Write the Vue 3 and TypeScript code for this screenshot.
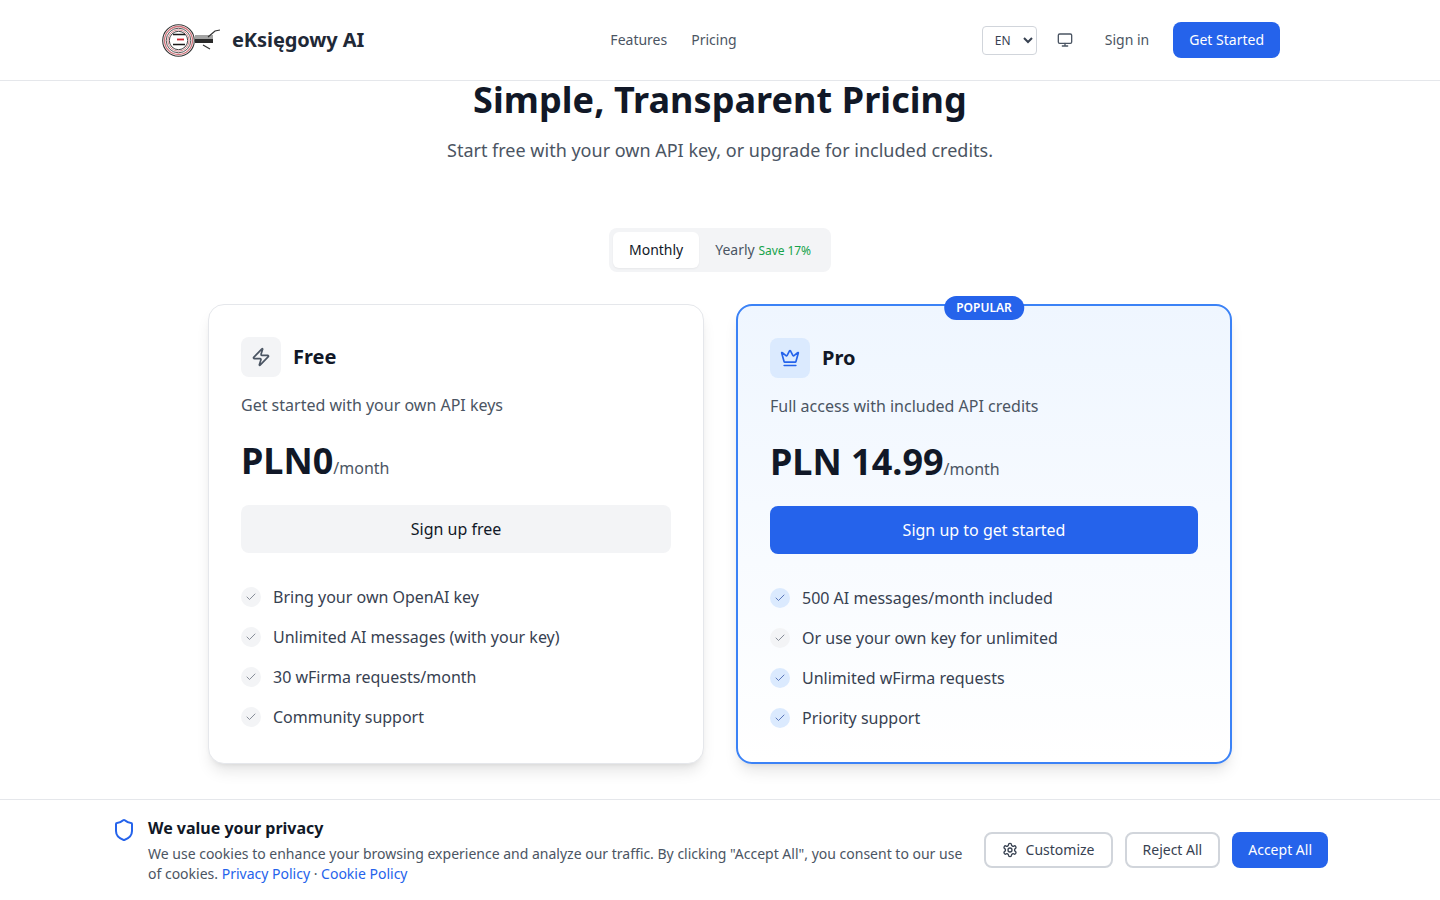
<script setup lang="ts">
import { ref } from 'vue';

interface Feature {
  text: string;
  highlight: boolean;
}

const lang = ref('en');

const freeFeatures: Feature[] = [
  { text: 'Bring your own OpenAI key', highlight: false },
  { text: 'Unlimited AI messages (with your key)', highlight: false },
  { text: '30 wFirma requests/month', highlight: false },
  { text: 'Community support', highlight: false },
];

const proFeatures: Feature[] = [
  { text: '500 AI messages/month included', highlight: true },
  { text: 'Or use your own key for unlimited', highlight: false },
  { text: 'Unlimited wFirma requests', highlight: true },
  { text: 'Priority support', highlight: true },
];
</script>

<template>
  <div class="page">
    <header class="header">
      <div class="header-inner">
        <a class="brand" href="#">
          <svg class="logo" width="60" height="36" viewBox="0 0 60 36" fill="none">
            <circle cx="18.5" cy="18.5" r="15.8" stroke="#333" stroke-width="1.1" />
            <circle cx="18.5" cy="18.5" r="14" stroke="#d0747c" stroke-width="1.3" />
            <circle cx="18.5" cy="18.5" r="12.3" stroke="#555" stroke-width="1" />
            <circle cx="18.5" cy="18.5" r="10.7" stroke="#d88a90" stroke-width="1" />
            <circle cx="18.5" cy="18.5" r="9.2" stroke="#444" stroke-width="1" />
            <path d="M13 12.5h12M13 22.5h12" stroke="#1a1a1a" stroke-width="1.6" />
            <path d="M17 17.5h7" stroke="#d0202c" stroke-width="1.8" />
            <rect x="35" y="13" width="18" height="4" fill="#a3a3a3" />
            <rect x="35" y="17" width="18" height="4" fill="#2a2a2a" />
            <path d="M48 15l7-6 5-1M43 23l7 4" stroke="#333" stroke-width="1.2" />
          </svg>
          <span class="brand-name">eKsięgowy AI</span>
        </a>
        <nav class="nav">
          <a href="#">Features</a>
          <a href="#">Pricing</a>
        </nav>
        <div class="header-actions">
          <select v-model="lang" class="lang-select">
            <option value="en">EN</option>
            <option value="pl">PL</option>
          </select>
          <button class="theme-btn" type="button" aria-label="Theme">
            <svg width="16" height="16" viewBox="0 0 24 24" fill="none" stroke="currentColor" stroke-width="2" stroke-linecap="round" stroke-linejoin="round">
              <rect x="2" y="3" width="20" height="14" rx="2" />
              <path d="M8 21h8M12 17v4" />
            </svg>
          </button>
          <a class="sign-in" href="#">Sign in</a>
          <a class="get-started" href="#">Get Started</a>
        </div>
      </div>
    </header>

    <main class="main">
      <h1 class="title">Simple, Transparent Pricing</h1>
      <p class="subtitle">Start free with your own API key, or upgrade for included credits.</p>

      <div class="billing-toggle">
        <button class="billing-option active" type="button">Monthly</button>
        <button class="billing-option" type="button">Yearly <span class="save">Save 17%</span></button>
      </div>

      <div class="plans">
        <section class="plan">
          <div class="plan-head">
            <div class="plan-icon">
              <svg width="20" height="20" viewBox="0 0 24 24" fill="none" stroke="currentColor" stroke-width="2" stroke-linecap="round" stroke-linejoin="round">
                <path d="M4 14a1 1 0 0 1-.78-1.63l9.9-10.2a.5.5 0 0 1 .86.46l-1.92 6.02A1 1 0 0 0 13 10h7a1 1 0 0 1 .78 1.63l-9.9 10.2a.5.5 0 0 1-.86-.46l1.92-6.02A1 1 0 0 0 11 14z" />
              </svg>
            </div>
            <h2 class="plan-name">Free</h2>
          </div>
          <p class="plan-desc">Get started with your own API keys</p>
          <div class="price"><span class="amount">PLN0</span><span class="period">/month</span></div>
          <a class="plan-btn" href="#">Sign up free</a>
          <ul class="features">
            <li v-for="item in freeFeatures" :key="item.text" class="feature">
              <span class="check">
                <svg width="12" height="12" viewBox="0 0 24 24" fill="none" stroke="currentColor" stroke-width="1.6" stroke-linecap="round" stroke-linejoin="round"><path d="M20 6 9 17l-5-5" /></svg>
              </span>
              {{ item.text }}
            </li>
          </ul>
        </section>

        <section class="plan pro">
          <span class="badge">POPULAR</span>
          <div class="plan-head">
            <div class="plan-icon">
              <svg width="20" height="20" viewBox="0 0 24 24" fill="none" stroke="currentColor" stroke-width="2" stroke-linecap="round" stroke-linejoin="round">
                <path d="M11.562 3.266a.5.5 0 0 1 .876 0L15.39 8.87a1 1 0 0 0 1.516.294L21.183 5.5a.5.5 0 0 1 .798.519l-2.834 10.246a1 1 0 0 1-.956.734H5.81a1 1 0 0 1-.957-.734L2.02 6.02a.5.5 0 0 1 .798-.519l4.276 3.664a1 1 0 0 0 1.516-.294z" />
                <path d="M5 21h14" />
              </svg>
            </div>
            <h2 class="plan-name">Pro</h2>
          </div>
          <p class="plan-desc">Full access with included API credits</p>
          <div class="price"><span class="amount">PLN 14.99</span><span class="period">/month</span></div>
          <a class="plan-btn primary" href="#">Sign up to get started</a>
          <ul class="features">
            <li v-for="item in proFeatures" :key="item.text" class="feature">
              <span class="check" :class="{ highlight: item.highlight }">
                <svg width="12" height="12" viewBox="0 0 24 24" fill="none" stroke="currentColor" stroke-width="1.6" stroke-linecap="round" stroke-linejoin="round"><path d="M20 6 9 17l-5-5" /></svg>
              </span>
              {{ item.text }}
            </li>
          </ul>
        </section>
      </div>
    </main>

    <aside class="cookie-bar">
      <div class="cookie-inner">
        <svg class="cookie-shield" width="24" height="24" viewBox="0 0 24 24" fill="none" stroke="currentColor" stroke-width="2" stroke-linecap="round" stroke-linejoin="round">
          <path d="M20 13c0 5-3.5 7.5-7.66 8.95a1 1 0 0 1-.67-.01C7.5 20.5 4 18 4 13V6a1 1 0 0 1 1-1c2 0 4.5-1.2 6.24-2.72a1.17 1.17 0 0 1 1.52 0C14.51 3.81 17 5 19 5a1 1 0 0 1 1 1z" />
        </svg>
        <div class="cookie-copy">
          <h3>We value your privacy</h3>
          <p>
            We use cookies to enhance your browsing experience and analyze our traffic. By clicking "Accept All", you consent to our use of cookies.
            <a href="#">Privacy Policy</a> · <a href="#">Cookie Policy</a>
          </p>
        </div>
        <div class="cookie-actions">
          <button class="outline-btn" type="button">
            <svg width="16" height="16" viewBox="0 0 24 24" fill="none" stroke="currentColor" stroke-width="2" stroke-linecap="round" stroke-linejoin="round">
              <path d="M12.22 2h-.44a2 2 0 0 0-2 2v.18a2 2 0 0 1-1 1.73l-.43.25a2 2 0 0 1-2 0l-.15-.08a2 2 0 0 0-2.73.73l-.22.38a2 2 0 0 0 .73 2.73l.15.1a2 2 0 0 1 1 1.72v.51a2 2 0 0 1-1 1.74l-.15.09a2 2 0 0 0-.73 2.73l.22.38a2 2 0 0 0 2.73.73l.15-.08a2 2 0 0 1 2 0l.43.25a2 2 0 0 1 1 1.73V20a2 2 0 0 0 2 2h.44a2 2 0 0 0 2-2v-.18a2 2 0 0 1 1-1.73l.43-.25a2 2 0 0 1 2 0l.15.08a2 2 0 0 0 2.73-.73l.22-.39a2 2 0 0 0-.73-2.73l-.15-.08a2 2 0 0 1-1-1.74v-.5a2 2 0 0 1 1-1.74l.15-.09a2 2 0 0 0 .73-2.73l-.22-.38a2 2 0 0 0-2.73-.73l-.15.08a2 2 0 0 1-2 0l-.43-.25a2 2 0 0 1-1-1.73V4a2 2 0 0 0-2-2z" />
              <circle cx="12" cy="12" r="3" />
            </svg>
            Customize
          </button>
          <button class="outline-btn" type="button">Reject All</button>
          <button class="accept-btn" type="button">Accept All</button>
        </div>
      </div>
    </aside>
  </div>
</template>

<style>
html, body {
  margin: 0;
  background: #fff;
}
</style>

<style scoped>
.page {
  font-family: "Noto Sans", sans-serif;
  color: #111827;
  background: #fff;
  height: 900px;
  overflow: hidden;
}

.header {
  height: 80px;
  border-bottom: 1px solid #e5e7eb;
  background: #fff;
  box-sizing: content-box;
}

.header-inner {
  width: 1120px;
  height: 100%;
  margin: 0 auto;
  display: flex;
  align-items: center;
  justify-content: space-between;
}

.brand {
  display: flex;
  align-items: center;
  gap: 12px;
  text-decoration: none;
  color: #1f2937;
}

.brand-name {
  padding-right: 1px;
  font-size: 20px;
  line-height: 28px;
  font-weight: 700;
  letter-spacing: -0.08px;
}

.nav {
  display: flex;
  gap: 24px;
}

.nav a {
  font-size: 14px;
  line-height: 20px;
  color: #4b5563;
  text-decoration: none;
}

.header-actions {
  display: flex;
  align-items: center;
}

.lang-select {
  width: 55px;
  height: 29px;
  padding: 0 0 0 8px;
  border: 1px solid #d1d5db;
  border-radius: 4px;
  background: #fff;
  color: #374151;
  font-family: inherit;
  font-size: 12px;
}

.theme-btn {
  display: flex;
  padding: 0;
  margin-left: 20px;
  border: 0;
  background: none;
  color: #4b5563;
}

.sign-in {
  margin-left: 32px;
  font-size: 14px;
  line-height: 20px;
  color: #4b5563;
  text-decoration: none;
}

.get-started {
  margin-left: 24px;
  padding: 0 16px;
  height: 36px;
  display: flex;
  align-items: center;
  border-radius: 8px;
  background: #2563eb;
  color: #fff;
  font-size: 14px;
  line-height: 20px;
  text-decoration: none;
}

.main {
  display: flex;
  flex-direction: column;
  align-items: center;
}

.title {
  margin: -1px 0 0;
  font-size: 36px;
  line-height: 40px;
  font-weight: 700;
  letter-spacing: 0.07px;
}

.subtitle {
  margin: 16px 0 0;
  font-size: 18px;
  line-height: 28px;
  color: #4b5563;
}

.billing-toggle {
  margin-top: 64px;
  display: flex;
  padding: 4px;
  border-radius: 8px;
  background: #f3f4f6;
}

.billing-option {
  height: 36px;
  padding: 0 16px;
  border: 0;
  border-radius: 6px;
  background: none;
  color: #4b5563;
  font-family: inherit;
  font-size: 14px;
  line-height: 20px;
}

.billing-option.active {
  background: #fff;
  color: #111827;
  box-shadow: 0 1px 2px rgba(0, 0, 0, 0.05);
}

.save {
  font-size: 12px;
  letter-spacing: -0.05px;
  color: #16a34a;
}

.plans {
  margin-top: 32px;
  width: 1024px;
  display: grid;
  grid-template-columns: 1fr 1fr;
  gap: 32px;
}

.plan {
  position: relative;
  padding: 32px;
  border: 1px solid #e5e7eb;
  border-radius: 16px;
  background: #fff;
  box-shadow: 0 10px 15px -3px rgba(0, 0, 0, 0.1), 0 4px 6px -4px rgba(0, 0, 0, 0.1);
}

.plan.pro {
  border: 2px solid #3b82f6;
  background: linear-gradient(to bottom, #eff6ff, #fff);
}

.badge {
  position: absolute;
  top: -10px;
  left: 50%;
  transform: translateX(-50%);
  padding: 0 12px;
  border-radius: 999px;
  background: #2563eb;
  color: #fff;
  font-size: 12px;
  font-weight: 600;
  line-height: 24px;
}

.plan-head {
  display: flex;
  align-items: center;
  gap: 12px;
}

.plan-icon {
  width: 40px;
  height: 40px;
  display: flex;
  align-items: center;
  justify-content: center;
  border-radius: 8px;
  background: #f3f4f6;
  color: #4b5563;
}

.pro .plan-icon {
  background: #dbeafe;
  color: #2563eb;
}

.plan-name {
  margin: 0;
  font-size: 20px;
  line-height: 28px;
  font-weight: 700;
}

.plan-desc {
  margin: 16px 0 0;
  font-size: 16px;
  line-height: 24px;
  color: #4b5563;
}

.price {
  margin-top: 24px;
  display: flex;
  align-items: baseline;
  height: 48px;
  line-height: 40px;
}

.amount {
  font-size: 36px;
  font-weight: 700;
}

.period {
  font-size: 16px;
  color: #4b5563;
}

.plan-btn {
  margin-top: 16px;
  height: 48px;
  display: flex;
  align-items: center;
  justify-content: center;
  border-radius: 8px;
  background: #f3f4f6;
  color: #111827;
  font-size: 16px;
  line-height: 24px;
  text-decoration: none;
}

.plan-btn.primary {
  background: #2563eb;
  color: #fff;
}

.features {
  list-style: none;
  margin: 32px 0 0;
  padding: 0;
  display: flex;
  flex-direction: column;
  gap: 16px;
}

.feature {
  display: flex;
  align-items: center;
  gap: 12px;
  font-size: 16px;
  line-height: 24px;
  color: #374151;
}

.check {
  width: 20px;
  height: 20px;
  display: flex;
  align-items: center;
  justify-content: center;
  border-radius: 50%;
  background: #f3f4f6;
  color: #6b7280;
}

.check.highlight {
  background: #dbeafe;
  color: #3b5aa8;
}

.cookie-bar {
  position: fixed;
  left: 0;
  right: 0;
  bottom: 0;
  border-top: 1px solid #e5e7eb;
  background: #fff;
}

.cookie-inner {
  width: 1216px;
  margin: 0 auto;
  padding: 16px 0;
  display: flex;
  align-items: center;
  gap: 12px;
}

.cookie-shield {
  align-self: flex-start;
  margin-top: 2px;
  flex-shrink: 0;
  color: #2563eb;
}

.cookie-copy {
  flex: 1;
  min-width: 0;
}

.cookie-copy h3 {
  margin: 0;
  font-size: 16px;
  line-height: 24px;
  font-weight: 700;
}

.cookie-copy p {
  margin: 4px 0 0;
  font-size: 14px;
  line-height: 20px;
  color: #4b5563;
}

.cookie-copy a {
  color: #2563eb;
  text-decoration: none;
}

.cookie-actions {
  flex-shrink: 0;
  display: flex;
  gap: 12px;
}

.outline-btn,
.accept-btn {
  height: 36px;
  padding: 0 16px;
  display: flex;
  align-items: center;
  gap: 8px;
  border-radius: 8px;
  font-family: inherit;
  font-size: 14px;
  line-height: 20px;
  white-space: nowrap;
}

.outline-btn {
  border: 2px solid #d1d5db;
  background: #fff;
  color: #374151;
}

.accept-btn {
  border: 0;
  background: #2563eb;
  color: #fff;
}
</style>
